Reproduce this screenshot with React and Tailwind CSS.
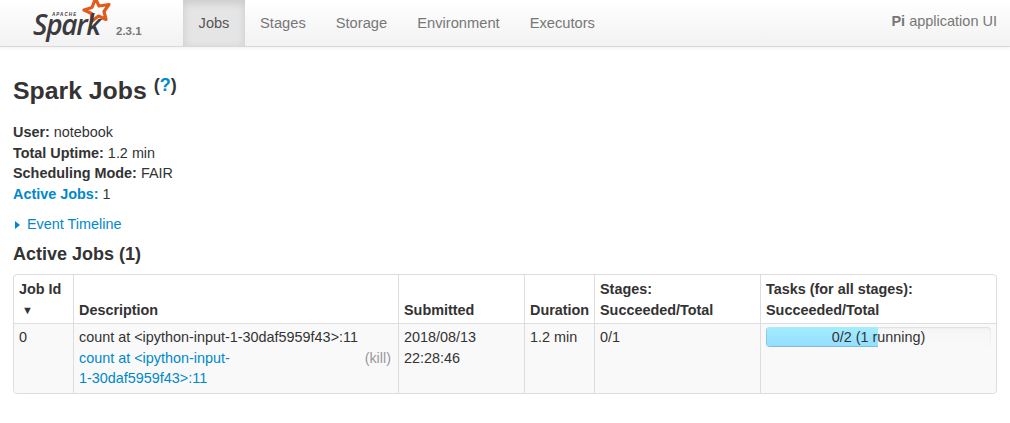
export default function App() {
  const tabs = ["Stages", "Storage", "Environment", "Executors"];
  return (
    <div className="w-[1010px] h-[423px] overflow-hidden bg-white text-[14.4px] leading-[20.6px] text-[#333]" style={{ fontFamily: '"Liberation Sans", Arial, sans-serif' }}>
      <nav className="flex h-[47px] border-b border-[#d9d9d9] bg-gradient-to-b from-white to-[#f2f2f2] shadow-[0_1px_4px_rgba(0,0,0,0.065)]">
        <div className="flex w-[183px] shrink-0 pl-[33px]">
          <div className="relative w-[82px] h-[46px]">
            <svg className="absolute left-[48px] top-[-2px]" width="34" height="28" viewBox="0 0 34 28">
              <path d="M14.5 0.5 L18 8 L28 6.5 L23 13.5 L25 21.5 L17.5 18 L10.5 23.5 L10.5 15.5 L3 12 L11 9.5 Z" fill="none" stroke="#e25a1c" strokeWidth="3.2" strokeLinejoin="round" />
            </svg>
            <span className="absolute left-[19px] top-[12px] text-[4.5px] leading-[5px] font-bold italic tracking-[1.1px] text-[#3c3a3e]">APACHE</span>
            <span className="absolute left-0 top-[10px] text-[28px] leading-[29px] font-semibold italic tracking-[-1.3px] text-[#3c3a3e]" style={{ fontFamily: '"Open Sans", sans-serif' }}>Spark</span>
          </div>
          <span className="ml-[1px] mt-[23px] text-[11.5px] leading-[16px] font-bold text-[#777]">2.3.1</span>
        </div>
        <a className="flex h-[46px] w-[62px] items-center justify-center bg-[#e5e5e5] text-[14.6px] text-[#555] shadow-[inset_0_3px_8px_rgba(0,0,0,0.125)]">Jobs</a>
        {tabs.map((t) => (
          <a key={t} className="flex h-[46px] items-center px-[15px] text-[14.7px] text-[#777]">{t}</a>
        ))}
        <p className="ml-auto pr-[13px] pt-[11px] text-[14.5px] text-[#777]"><strong>Pi</strong> application UI</p>
      </nav>

      <main className="px-[13px]">
        <h3 className="mt-[24px] flex items-start text-[24.8px] leading-[40px] font-bold text-[#333]">
          Spark Jobs
          <sup className="ml-[7px] mt-[-6px] text-[18px] leading-[40px] static font-bold">(<a className="text-[#0088cc]">?</a>)</sup>
        </h3>
        <ul className="mt-[11px]">
          <li><strong>User:</strong> notebook</li>
          <li><strong>Total Uptime:</strong> 1.2 min</li>
          <li><strong>Scheduling Mode:</strong> FAIR</li>
          <li><a className="font-bold text-[#0088cc]">Active Jobs:</a> 1</li>
        </ul>
        <div className="mt-[10px] flex items-center text-[#0088cc]">
          <span className="ml-[2px] mr-[7px] h-0 w-0 border-y-[4.5px] border-l-[5px] border-y-transparent border-l-[#0088cc]" />
          <span>Event Timeline</span>
        </div>
        <h4 className="mt-[8px] text-[18px] leading-[22px] font-bold">Active Jobs (1)</h4>
        <table className="mt-[9px] w-[984px] table-fixed border-separate border-spacing-0 rounded-[4px] border border-[#ddd]">
          <colgroup>
            <col className="w-[59px]" /><col className="w-[325px]" /><col className="w-[126px]" /><col className="w-[70px]" /><col className="w-[166px]" /><col />
          </colgroup>
          <thead>
            <tr className="font-bold align-bottom">
              <th className="px-[5px] pt-[4px] pb-[3px] text-left">Job Id<div className="pl-[3px] text-[11px]">▼</div></th>
              {["Description", "Submitted", "Duration"].map((h) => (
                <th key={h} className="border-l border-[#ddd] px-[5px] pt-[4px] pb-[3px] text-left">{h}</th>
              ))}
              <th className="border-l border-[#ddd] px-[5px] pt-[4px] pb-[3px] text-left">Stages:<br />Succeeded/Total</th>
              <th className="border-l border-[#ddd] px-[5px] pt-[4px] pb-[3px] text-left">Tasks (for all stages):<br />Succeeded/Total</th>
            </tr>
          </thead>
          <tbody className="bg-[#f9f9f9] align-top">
            <tr>
              <td className="rounded-bl-[4px] border-t border-[#ddd] px-[5px] pt-[3px] pb-[4px]">0</td>
              <td className="border-t border-l border-[#ddd] px-[5px] pt-[3px] pb-[4px]">
                <div>count at &lt;ipython-input-1-30daf5959f43&gt;:11</div>
                <div className="flex items-start justify-between">
                  <a className="w-[160px] text-[#0088cc]">count at &lt;ipython-input-1-30daf5959f43&gt;:11</a>
                  <span className="pr-[2px] text-[#999]">(kill)</span>
                </div>
              </td>
              <td className="border-t border-l border-[#ddd] px-[5px] pt-[3px] pb-[4px]">2018/08/13 22:28:46</td>
              <td className="border-t border-l border-[#ddd] px-[5px] pt-[3px] pb-[4px]">1.2 min</td>
              <td className="border-t border-l border-[#ddd] px-[5px] pt-[3px] pb-[4px]">0/1</td>
              <td className="rounded-br-[4px] border-t border-l border-[#ddd] px-[5px] pt-[3px] pb-[4px]">
                <div className="relative h-[20px] overflow-hidden rounded-[4px] bg-gradient-to-b from-[#f5f5f5] to-[#f9f9f9] shadow-[inset_0_1px_2px_rgba(0,0,0,0.1)]">
                  <div className="h-full w-[112px] bg-gradient-to-b from-[#a4edff] to-[#94ddff] shadow-[inset_0_-1px_0_rgba(0,0,0,0.15),inset_1px_0_0_rgba(0,0,0,0.12)]" />
                  <span className="absolute inset-0 text-center leading-[20px]">0/2 (1 running)</span>
                </div>
              </td>
            </tr>
          </tbody>
        </table>
      </main>
    </div>
  );
}
